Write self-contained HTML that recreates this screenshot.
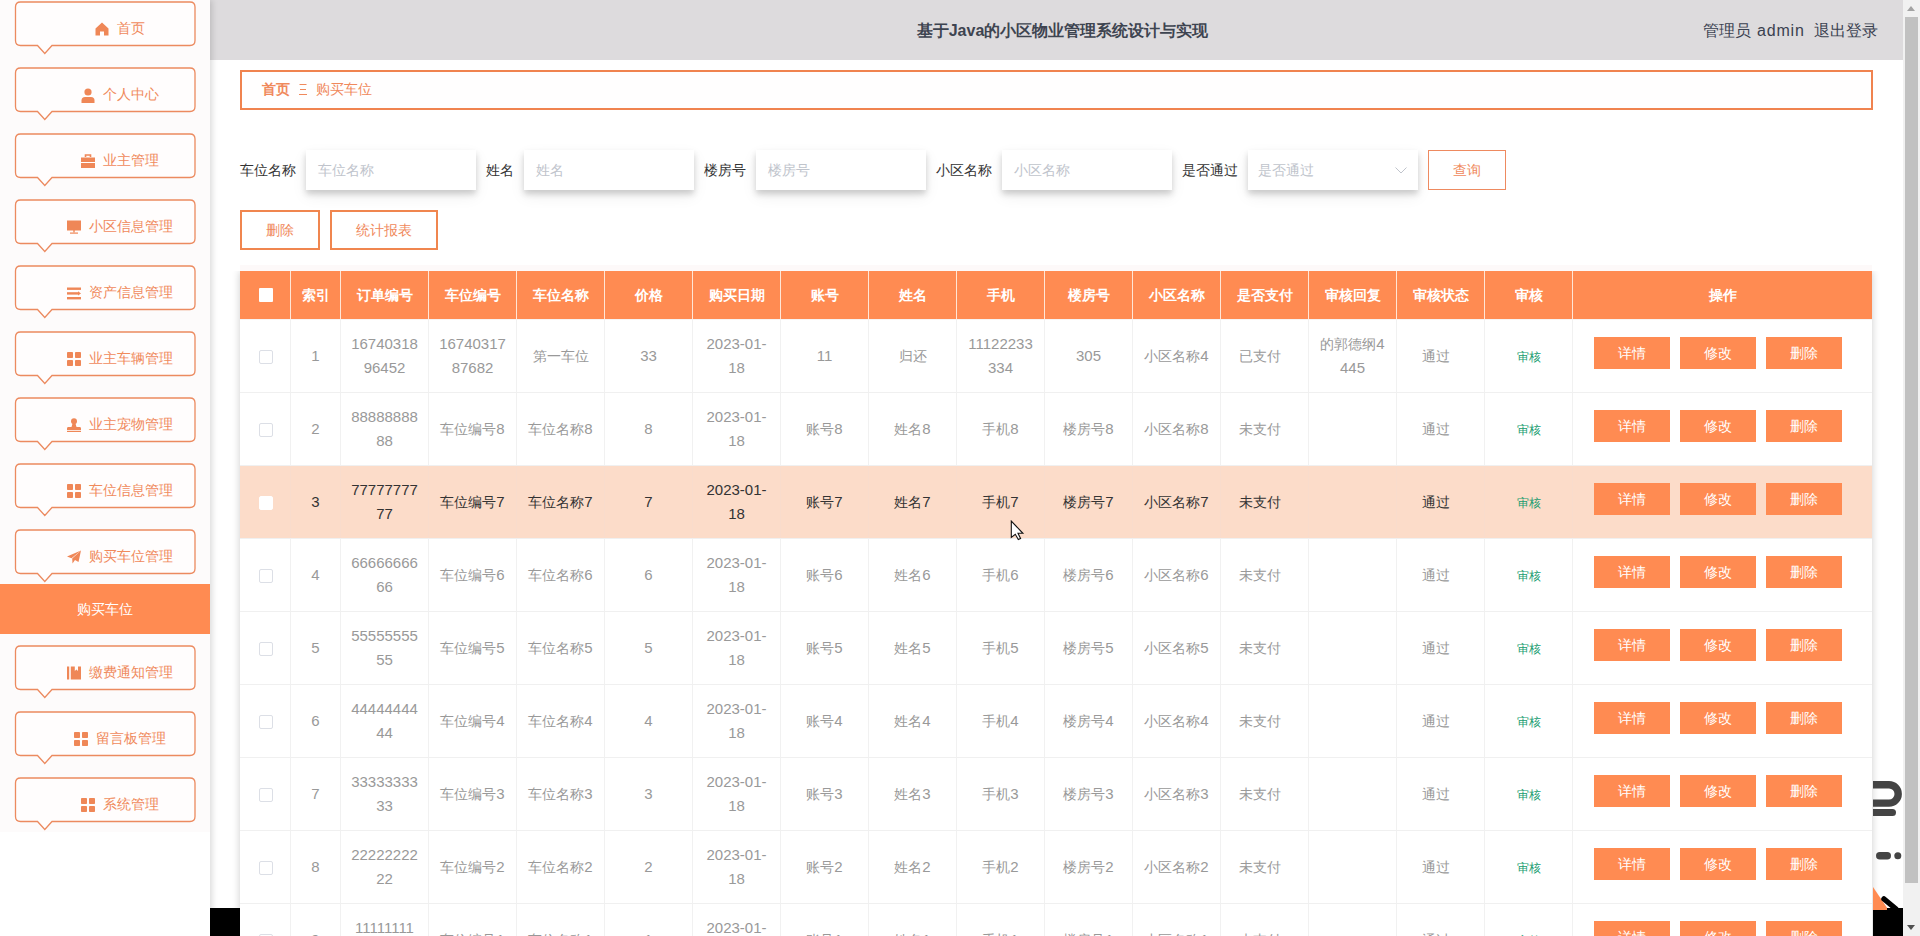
<!DOCTYPE html>
<html><head><meta charset="utf-8">
<style>
*{box-sizing:border-box;margin:0;padding:0}
html,body{width:1920px;height:936px;overflow:hidden;background:#fff;font-family:"Liberation Sans",sans-serif;}
#side{position:absolute;left:0;top:0;width:210px;height:936px;background:#fff;box-shadow:2px 0 6px rgba(0,0,0,0.15);z-index:3}
.mi{position:absolute;left:0;width:210px;height:66px}
.bb{position:absolute;left:13px;top:0}
.lab{position:absolute;left:44px;width:152px;top:20px;height:18px;display:flex;align-items:center;justify-content:center;color:#f08a5c;font-size:14px;white-space:nowrap}
.lab svg{margin-right:8px;flex:none}
#act{position:absolute;left:0;top:584px;width:210px;height:50px;background:#ff8b52;color:#fff;font-size:14px;line-height:50px;text-align:center}
#head{position:absolute;left:210px;top:0;width:1693px;height:60px;background:#dddbdd;z-index:2}
#title{position:absolute;left:0;width:1705px;top:20px;text-align:center;font-size:16px;font-weight:bold;color:#3d4450;line-height:22px}
.usr{position:absolute;top:20px;font-size:16px;color:#3a4150;line-height:22px;white-space:nowrap}
#sb{position:absolute;left:1903px;top:0;width:17px;height:936px;background:#f1f1f1;z-index:5}
#thumb{position:absolute;left:2px;top:17px;width:13px;height:866px;background:#c1c1c1}
.arr{position:absolute;left:4px;width:0;height:0;border-left:4.5px solid transparent;border-right:4.5px solid transparent}
#bc{position:absolute;left:240px;top:70px;width:1633px;height:40px;border:2px solid #f0834f;background:#fffefe;font-size:14px;color:#f0895c;line-height:36px}
#bc b{position:absolute;left:20px;top:-1px}
#bc .sep{position:absolute;left:57px;top:12px}
#bc span{position:absolute;left:74px;top:-1px}
.lbl{position:absolute;top:159px;font-size:14px;color:#333;line-height:22px;white-space:nowrap}
.inp{position:absolute;top:150px;width:170px;height:40px;background:#fff;box-shadow:0 4px 6px rgba(0,0,0,0.17),0 6px 16px rgba(0,0,0,0.07);font-size:14px;color:#c0c4cc;padding-left:12px;line-height:40px}
.obtn{position:absolute;top:210px;height:40px;border:2px solid #f0864f;color:#f0895c;font-size:14px;line-height:36px;text-align:center;background:#fff}
#q{position:absolute;left:1428px;top:150px;width:78px;height:40px;border:1px solid #ee8a60;color:#f0895c;font-size:14px;line-height:38px;text-align:center;background:#fff}
#tbl{position:absolute;left:240px;top:271px;width:1632px;height:720px;background:#fff;box-shadow:0 0 8px rgba(0,0,0,0.2)}
.th{position:absolute;top:0;height:49px;background:#ff8b52;color:#fff;font-weight:bold;font-size:14px;line-height:48px;text-align:center;border-bottom:1px solid #f7f3f1;background-clip:padding-box}
.cbh{display:inline-block;width:14px;height:14px;margin-left:1px;background:#fff;border-radius:1px;vertical-align:middle;margin-top:-3px}
.tr{position:absolute;left:0;width:1632px;height:73px;border-bottom:1px solid #f0f0f0;background:#fff;--bd:#f1f1f1}
.tr.hov{background:#fcdcc9}
.td{position:absolute;top:0;height:72px;display:flex;align-items:center;justify-content:center;text-align:center;color:#999;font-size:14px;line-height:24px}
.hov .td{color:#333}
.tr.hov{--bd:#f9dccc}
.cb{display:inline-block;width:14px;height:14px;margin-left:1px;border:1px solid #dcdfe6;border-radius:2px;background:#fff;vertical-align:middle}
.hov .cb{border-color:#fff}
.n{font-size:15px}
.sh{color:#209d70;font-size:12px}
.td.pr{padding-right:9px}
.td.ops{justify-content:flex-start;padding-left:21px}
.ops .ct{margin-top:-7px;display:flex}
.btn{display:inline-block;width:76px;height:32px;line-height:32px;background:#ff8b52;color:#fff;font-size:14px;margin-right:10px}
.btn:last-child{margin-right:0}
.blk{position:absolute;background:#000;z-index:6}
</style></head><body>
<div id="side">
<div style="position:absolute;left:0;top:0;width:210px;height:832px;background:#fdfbfb"></div>
<div class="mi" style="top:0px">
<svg class="bb" width="184" height="58" viewBox="0 0 184 58"><path d="M7.5 2 H177 Q182 2 182 7 V40.5 Q182 45.5 177 45.5 H39 L31.8 53.5 L24.5 45.5 H7.5 Q2.5 45.5 2.5 40.5 V7 Q2.5 2 7.5 2 Z" fill="#fffdfd" stroke="#ec8a5f" stroke-width="1.3"/></svg>
<div class="lab"><svg width="14" height="14" viewBox="0 0 14 14"><path d="M7 0.5 L13.5 6.5 V13.5 H9 V9.5 H5 V13.5 H0.5 V6.5 Z" fill="#ef8757"/></svg><span>首页</span></div></div>
<div class="mi" style="top:66px">
<svg class="bb" width="184" height="58" viewBox="0 0 184 58"><path d="M7.5 2 H177 Q182 2 182 7 V40.5 Q182 45.5 177 45.5 H39 L31.8 53.5 L24.5 45.5 H7.5 Q2.5 45.5 2.5 40.5 V7 Q2.5 2 7.5 2 Z" fill="#fffdfd" stroke="#ec8a5f" stroke-width="1.3"/></svg>
<div class="lab"><svg width="14" height="15" viewBox="0 0 14 15"><circle cx="7" cy="4" r="3.6" fill="#ef8757"/><path d="M0.5 15 V12.5 Q0.5 9 4 9 H10 Q13.5 9 13.5 12.5 V15 Z" fill="#ef8757"/></svg><span>个人中心</span></div></div>
<div class="mi" style="top:132px">
<svg class="bb" width="184" height="58" viewBox="0 0 184 58"><path d="M7.5 2 H177 Q182 2 182 7 V40.5 Q182 45.5 177 45.5 H39 L31.8 53.5 L24.5 45.5 H7.5 Q2.5 45.5 2.5 40.5 V7 Q2.5 2 7.5 2 Z" fill="#fffdfd" stroke="#ec8a5f" stroke-width="1.3"/></svg>
<div class="lab"><svg width="14" height="14" viewBox="0 0 14 14"><path d="M4.5 3 V1 H9.5 V3" stroke="#ef8757" stroke-width="1.6" fill="none"/><rect x="0" y="3.5" width="14" height="4.5" fill="#ef8757"/><rect x="0" y="9" width="14" height="5" fill="#ef8757"/></svg><span>业主管理</span></div></div>
<div class="mi" style="top:198px">
<svg class="bb" width="184" height="58" viewBox="0 0 184 58"><path d="M7.5 2 H177 Q182 2 182 7 V40.5 Q182 45.5 177 45.5 H39 L31.8 53.5 L24.5 45.5 H7.5 Q2.5 45.5 2.5 40.5 V7 Q2.5 2 7.5 2 Z" fill="#fffdfd" stroke="#ec8a5f" stroke-width="1.3"/></svg>
<div class="lab"><svg width="14" height="14" viewBox="0 0 14 14"><rect x="0" y="0.5" width="14" height="10" fill="#ef8757"/><rect x="6.3" y="10" width="1.4" height="2.5" fill="#ef8757"/><rect x="3" y="12.5" width="8" height="1.2" fill="#ef8757"/></svg><span>小区信息管理</span></div></div>
<div class="mi" style="top:264px">
<svg class="bb" width="184" height="58" viewBox="0 0 184 58"><path d="M7.5 2 H177 Q182 2 182 7 V40.5 Q182 45.5 177 45.5 H39 L31.8 53.5 L24.5 45.5 H7.5 Q2.5 45.5 2.5 40.5 V7 Q2.5 2 7.5 2 Z" fill="#fffdfd" stroke="#ec8a5f" stroke-width="1.3"/></svg>
<div class="lab"><svg width="14" height="13" viewBox="0 0 14 13"><rect x="0" y="0.5" width="14" height="2.4" fill="#ef8757"/><rect x="0" y="5.2" width="11" height="2.4" fill="#ef8757"/><path d="M11 4.2 L14 6.4 L11 8.6 Z" fill="#ef8757"/><rect x="0" y="10" width="14" height="2.4" fill="#ef8757"/></svg><span>资产信息管理</span></div></div>
<div class="mi" style="top:330px">
<svg class="bb" width="184" height="58" viewBox="0 0 184 58"><path d="M7.5 2 H177 Q182 2 182 7 V40.5 Q182 45.5 177 45.5 H39 L31.8 53.5 L24.5 45.5 H7.5 Q2.5 45.5 2.5 40.5 V7 Q2.5 2 7.5 2 Z" fill="#fffdfd" stroke="#ec8a5f" stroke-width="1.3"/></svg>
<div class="lab"><svg width="14" height="14" viewBox="0 0 14 14"><rect x="0" y="0" width="6" height="6" rx="0.8" fill="#ef8757"/><rect x="8" y="0" width="6" height="6" rx="0.8" fill="#ef8757"/><rect x="0" y="8" width="6" height="6" rx="0.8" fill="#ef8757"/><rect x="8" y="8" width="6" height="6" rx="0.8" fill="#ef8757"/></svg><span>业主车辆管理</span></div></div>
<div class="mi" style="top:396px">
<svg class="bb" width="184" height="58" viewBox="0 0 184 58"><path d="M7.5 2 H177 Q182 2 182 7 V40.5 Q182 45.5 177 45.5 H39 L31.8 53.5 L24.5 45.5 H7.5 Q2.5 45.5 2.5 40.5 V7 Q2.5 2 7.5 2 Z" fill="#fffdfd" stroke="#ec8a5f" stroke-width="1.3"/></svg>
<div class="lab"><svg width="14" height="14" viewBox="0 0 14 14"><circle cx="7" cy="3.2" r="3" fill="#ef8757"/><path d="M5.5 5.5 H8.5 L9.5 9 H13 Q14 9 14 10.5 V12 H0 V10.5 Q0 9 1 9 H4.5 Z" fill="#ef8757"/><rect x="0" y="12.8" width="14" height="1.2" fill="#ef8757"/></svg><span>业主宠物管理</span></div></div>
<div class="mi" style="top:462px">
<svg class="bb" width="184" height="58" viewBox="0 0 184 58"><path d="M7.5 2 H177 Q182 2 182 7 V40.5 Q182 45.5 177 45.5 H39 L31.8 53.5 L24.5 45.5 H7.5 Q2.5 45.5 2.5 40.5 V7 Q2.5 2 7.5 2 Z" fill="#fffdfd" stroke="#ec8a5f" stroke-width="1.3"/></svg>
<div class="lab"><svg width="14" height="14" viewBox="0 0 14 14"><rect x="0" y="0" width="6" height="6" rx="0.8" fill="#ef8757"/><rect x="8" y="0" width="6" height="6" rx="0.8" fill="#ef8757"/><rect x="0" y="8" width="6" height="6" rx="0.8" fill="#ef8757"/><rect x="8" y="8" width="6" height="6" rx="0.8" fill="#ef8757"/></svg><span>车位信息管理</span></div></div>
<div class="mi" style="top:528px">
<svg class="bb" width="184" height="58" viewBox="0 0 184 58"><path d="M7.5 2 H177 Q182 2 182 7 V40.5 Q182 45.5 177 45.5 H39 L31.8 53.5 L24.5 45.5 H7.5 Q2.5 45.5 2.5 40.5 V7 Q2.5 2 7.5 2 Z" fill="#fffdfd" stroke="#ec8a5f" stroke-width="1.3"/></svg>
<div class="lab"><svg width="14" height="14" viewBox="0 0 14 14"><path d="M14 0.5 L0 6.5 L4.5 8.3 Z" fill="#ef8757"/><path d="M14 0.5 L5.2 8.6 L5.5 13.5 L8 10 L11.5 12 Z" fill="#ef8757"/></svg><span>购买车位管理</span></div></div>
<div class="mi" style="top:644px">
<svg class="bb" width="184" height="58" viewBox="0 0 184 58"><path d="M7.5 2 H177 Q182 2 182 7 V40.5 Q182 45.5 177 45.5 H39 L31.8 53.5 L24.5 45.5 H7.5 Q2.5 45.5 2.5 40.5 V7 Q2.5 2 7.5 2 Z" fill="#fffdfd" stroke="#ec8a5f" stroke-width="1.3"/></svg>
<div class="lab"><svg width="14" height="14" viewBox="0 0 14 14"><rect x="0" y="0.5" width="2.2" height="13" fill="#ef8757"/><path d="M3.8 0.5 H7.8 V5 L9.4 3.6 L11 5 V0.5 H14 V13.5 H3.8 Z" fill="#ef8757"/></svg><span>缴费通知管理</span></div></div>
<div class="mi" style="top:710px">
<svg class="bb" width="184" height="58" viewBox="0 0 184 58"><path d="M7.5 2 H177 Q182 2 182 7 V40.5 Q182 45.5 177 45.5 H39 L31.8 53.5 L24.5 45.5 H7.5 Q2.5 45.5 2.5 40.5 V7 Q2.5 2 7.5 2 Z" fill="#fffdfd" stroke="#ec8a5f" stroke-width="1.3"/></svg>
<div class="lab"><svg width="14" height="14" viewBox="0 0 14 14"><rect x="0" y="0" width="6" height="6" rx="0.8" fill="#ef8757"/><rect x="8" y="0" width="6" height="6" rx="0.8" fill="#ef8757"/><rect x="0" y="8" width="6" height="6" rx="0.8" fill="#ef8757"/><rect x="8" y="8" width="6" height="6" rx="0.8" fill="#ef8757"/></svg><span>留言板管理</span></div></div>
<div class="mi" style="top:776px">
<svg class="bb" width="184" height="58" viewBox="0 0 184 58"><path d="M7.5 2 H177 Q182 2 182 7 V40.5 Q182 45.5 177 45.5 H39 L31.8 53.5 L24.5 45.5 H7.5 Q2.5 45.5 2.5 40.5 V7 Q2.5 2 7.5 2 Z" fill="#fffdfd" stroke="#ec8a5f" stroke-width="1.3"/></svg>
<div class="lab"><svg width="14" height="14" viewBox="0 0 14 14"><rect x="0" y="0" width="6" height="6" rx="0.8" fill="#ef8757"/><rect x="8" y="0" width="6" height="6" rx="0.8" fill="#ef8757"/><rect x="0" y="8" width="6" height="6" rx="0.8" fill="#ef8757"/><rect x="8" y="8" width="6" height="6" rx="0.8" fill="#ef8757"/></svg><span>系统管理</span></div></div>
<div id="act">购买车位</div>
</div>
<div id="head"><div id="title">基于Java的小区物业管理系统设计与实现</div><div class="usr" style="left:1493px">管理员</div><div class="usr" style="left:1547px;letter-spacing:0.8px">admin</div><div class="usr" style="left:1604px">退出登录</div></div>
<div id="bc"><b>首页</b><svg class="sep" width="8" height="11" viewBox="0 0 8 11"><rect x="0.5" y="0" width="7" height="1" fill="#f0895c"/><rect x="1" y="5" width="6" height="1" fill="#f0895c"/><rect x="0" y="10" width="8" height="1" fill="#f0895c"/></svg><span>购买车位</span></div>
<div class="lbl" style="left:240px">车位名称</div><div class="inp" style="left:306px">车位名称</div>
<div class="lbl" style="left:486px">姓名</div><div class="inp" style="left:524px">姓名</div>
<div class="lbl" style="left:704px">楼房号</div><div class="inp" style="left:756px">楼房号</div>
<div class="lbl" style="left:936px">小区名称</div><div class="inp" style="left:1002px">小区名称</div>
<div class="lbl" style="left:1182px">是否通过</div><div class="inp" style="left:1248px;padding-left:10px">是否通过<svg style="position:absolute;left:147px;top:17px" width="12" height="7" viewBox="0 0 12 7"><path d="M0.5 0.5 L6 6 L11.5 0.5" stroke="#c0c4cc" stroke-width="1" fill="none"/></svg></div>
<div id="q">查询</div>
<div class="obtn" style="left:240px;width:80px">删除</div>
<div class="obtn" style="left:330px;width:108px">统计报表</div>
<div id="tbl">
<div class="th" style="left:0px;width:50px;"><i class="cbh"></i></div>
<div class="th" style="left:50px;width:50px;border-left:1px solid #ffe6d6;">索引</div>
<div class="th" style="left:100px;width:88px;border-left:1px solid #ffe6d6;">订单编号</div>
<div class="th" style="left:188px;width:88px;border-left:1px solid #ffe6d6;">车位编号</div>
<div class="th" style="left:276px;width:88px;border-left:1px solid #ffe6d6;">车位名称</div>
<div class="th" style="left:364px;width:88px;border-left:1px solid #ffe6d6;">价格</div>
<div class="th" style="left:452px;width:88px;border-left:1px solid #ffe6d6;">购买日期</div>
<div class="th" style="left:540px;width:88px;border-left:1px solid #ffe6d6;">账号</div>
<div class="th" style="left:628px;width:88px;border-left:1px solid #ffe6d6;">姓名</div>
<div class="th" style="left:716px;width:88px;border-left:1px solid #ffe6d6;">手机</div>
<div class="th" style="left:804px;width:88px;border-left:1px solid #ffe6d6;">楼房号</div>
<div class="th" style="left:892px;width:88px;border-left:1px solid #ffe6d6;">小区名称</div>
<div class="th" style="left:980px;width:88px;border-left:1px solid #ffe6d6;">是否支付</div>
<div class="th" style="left:1068px;width:88px;border-left:1px solid #ffe6d6;">审核回复</div>
<div class="th" style="left:1156px;width:88px;border-left:1px solid #ffe6d6;">审核状态</div>
<div class="th" style="left:1244px;width:88px;border-left:1px solid #ffe6d6;">审核</div>
<div class="th" style="left:1332px;width:300px;border-left:1px solid #ffe6d6;">操作</div>
<div class="tr" style="top:49px"><div class="td" style="left:0px;width:50px;"><div class="ct"><i class="cb"></i></div></div><div class="td" style="left:50px;width:50px;border-left:1px solid var(--bd);"><div class="ct"><span class="n">1</span></div></div><div class="td" style="left:100px;width:88px;border-left:1px solid var(--bd);"><div class="ct"><span class="n">16740318</span><br><span class="n">96452</span></div></div><div class="td" style="left:188px;width:88px;border-left:1px solid var(--bd);"><div class="ct"><span class="n">16740317</span><br><span class="n">87682</span></div></div><div class="td" style="left:276px;width:88px;border-left:1px solid var(--bd);"><div class="ct">第一车位</div></div><div class="td" style="left:364px;width:88px;border-left:1px solid var(--bd);"><div class="ct"><span class="n">33</span></div></div><div class="td" style="left:452px;width:88px;border-left:1px solid var(--bd);"><div class="ct"><span class="n">2023-01-</span><br><span class="n">18</span></div></div><div class="td" style="left:540px;width:88px;border-left:1px solid var(--bd);"><div class="ct"><span class="n">11</span></div></div><div class="td" style="left:628px;width:88px;border-left:1px solid var(--bd);"><div class="ct">归还</div></div><div class="td" style="left:716px;width:88px;border-left:1px solid var(--bd);"><div class="ct"><span class="n">11122233</span><br><span class="n">334</span></div></div><div class="td" style="left:804px;width:88px;border-left:1px solid var(--bd);"><div class="ct"><span class="n">305</span></div></div><div class="td" style="left:892px;width:88px;border-left:1px solid var(--bd);"><div class="ct">小区名称<span class="n">4</span></div></div><div class="td pr" style="left:980px;width:88px;border-left:1px solid var(--bd);"><div class="ct">已支付</div></div><div class="td" style="left:1068px;width:88px;border-left:1px solid var(--bd);"><div class="ct">的郭德纲<span class="n">4</span><br><span class="n">445</span></div></div><div class="td pr" style="left:1156px;width:88px;border-left:1px solid var(--bd);"><div class="ct">通过</div></div><div class="td" style="left:1244px;width:88px;border-left:1px solid var(--bd);"><div class="ct"><span class="sh">审核</span></div></div><div class="td ops" style="left:1332px;width:300px;border-left:1px solid var(--bd);"><div class="ct"><span class="btn">详情</span><span class="btn">修改</span><span class="btn">删除</span></div></div></div>
<div class="tr" style="top:122px"><div class="td" style="left:0px;width:50px;"><div class="ct"><i class="cb"></i></div></div><div class="td" style="left:50px;width:50px;border-left:1px solid var(--bd);"><div class="ct"><span class="n">2</span></div></div><div class="td" style="left:100px;width:88px;border-left:1px solid var(--bd);"><div class="ct"><span class="n">88888888</span><br><span class="n">88</span></div></div><div class="td" style="left:188px;width:88px;border-left:1px solid var(--bd);"><div class="ct">车位编号<span class="n">8</span></div></div><div class="td" style="left:276px;width:88px;border-left:1px solid var(--bd);"><div class="ct">车位名称<span class="n">8</span></div></div><div class="td" style="left:364px;width:88px;border-left:1px solid var(--bd);"><div class="ct"><span class="n">8</span></div></div><div class="td" style="left:452px;width:88px;border-left:1px solid var(--bd);"><div class="ct"><span class="n">2023-01-</span><br><span class="n">18</span></div></div><div class="td" style="left:540px;width:88px;border-left:1px solid var(--bd);"><div class="ct">账号<span class="n">8</span></div></div><div class="td" style="left:628px;width:88px;border-left:1px solid var(--bd);"><div class="ct">姓名<span class="n">8</span></div></div><div class="td" style="left:716px;width:88px;border-left:1px solid var(--bd);"><div class="ct">手机<span class="n">8</span></div></div><div class="td" style="left:804px;width:88px;border-left:1px solid var(--bd);"><div class="ct">楼房号<span class="n">8</span></div></div><div class="td" style="left:892px;width:88px;border-left:1px solid var(--bd);"><div class="ct">小区名称<span class="n">8</span></div></div><div class="td pr" style="left:980px;width:88px;border-left:1px solid var(--bd);"><div class="ct">未支付</div></div><div class="td" style="left:1068px;width:88px;border-left:1px solid var(--bd);"><div class="ct"></div></div><div class="td pr" style="left:1156px;width:88px;border-left:1px solid var(--bd);"><div class="ct">通过</div></div><div class="td" style="left:1244px;width:88px;border-left:1px solid var(--bd);"><div class="ct"><span class="sh">审核</span></div></div><div class="td ops" style="left:1332px;width:300px;border-left:1px solid var(--bd);"><div class="ct"><span class="btn">详情</span><span class="btn">修改</span><span class="btn">删除</span></div></div></div>
<div class="tr hov" style="top:195px"><div class="td" style="left:0px;width:50px;"><div class="ct"><i class="cb"></i></div></div><div class="td" style="left:50px;width:50px;border-left:1px solid var(--bd);"><div class="ct"><span class="n">3</span></div></div><div class="td" style="left:100px;width:88px;border-left:1px solid var(--bd);"><div class="ct"><span class="n">77777777</span><br><span class="n">77</span></div></div><div class="td" style="left:188px;width:88px;border-left:1px solid var(--bd);"><div class="ct">车位编号<span class="n">7</span></div></div><div class="td" style="left:276px;width:88px;border-left:1px solid var(--bd);"><div class="ct">车位名称<span class="n">7</span></div></div><div class="td" style="left:364px;width:88px;border-left:1px solid var(--bd);"><div class="ct"><span class="n">7</span></div></div><div class="td" style="left:452px;width:88px;border-left:1px solid var(--bd);"><div class="ct"><span class="n">2023-01-</span><br><span class="n">18</span></div></div><div class="td" style="left:540px;width:88px;border-left:1px solid var(--bd);"><div class="ct">账号<span class="n">7</span></div></div><div class="td" style="left:628px;width:88px;border-left:1px solid var(--bd);"><div class="ct">姓名<span class="n">7</span></div></div><div class="td" style="left:716px;width:88px;border-left:1px solid var(--bd);"><div class="ct">手机<span class="n">7</span></div></div><div class="td" style="left:804px;width:88px;border-left:1px solid var(--bd);"><div class="ct">楼房号<span class="n">7</span></div></div><div class="td" style="left:892px;width:88px;border-left:1px solid var(--bd);"><div class="ct">小区名称<span class="n">7</span></div></div><div class="td pr" style="left:980px;width:88px;border-left:1px solid var(--bd);"><div class="ct">未支付</div></div><div class="td" style="left:1068px;width:88px;border-left:1px solid var(--bd);"><div class="ct"></div></div><div class="td pr" style="left:1156px;width:88px;border-left:1px solid var(--bd);"><div class="ct">通过</div></div><div class="td" style="left:1244px;width:88px;border-left:1px solid var(--bd);"><div class="ct"><span class="sh">审核</span></div></div><div class="td ops" style="left:1332px;width:300px;border-left:1px solid var(--bd);"><div class="ct"><span class="btn">详情</span><span class="btn">修改</span><span class="btn">删除</span></div></div></div>
<div class="tr" style="top:268px"><div class="td" style="left:0px;width:50px;"><div class="ct"><i class="cb"></i></div></div><div class="td" style="left:50px;width:50px;border-left:1px solid var(--bd);"><div class="ct"><span class="n">4</span></div></div><div class="td" style="left:100px;width:88px;border-left:1px solid var(--bd);"><div class="ct"><span class="n">66666666</span><br><span class="n">66</span></div></div><div class="td" style="left:188px;width:88px;border-left:1px solid var(--bd);"><div class="ct">车位编号<span class="n">6</span></div></div><div class="td" style="left:276px;width:88px;border-left:1px solid var(--bd);"><div class="ct">车位名称<span class="n">6</span></div></div><div class="td" style="left:364px;width:88px;border-left:1px solid var(--bd);"><div class="ct"><span class="n">6</span></div></div><div class="td" style="left:452px;width:88px;border-left:1px solid var(--bd);"><div class="ct"><span class="n">2023-01-</span><br><span class="n">18</span></div></div><div class="td" style="left:540px;width:88px;border-left:1px solid var(--bd);"><div class="ct">账号<span class="n">6</span></div></div><div class="td" style="left:628px;width:88px;border-left:1px solid var(--bd);"><div class="ct">姓名<span class="n">6</span></div></div><div class="td" style="left:716px;width:88px;border-left:1px solid var(--bd);"><div class="ct">手机<span class="n">6</span></div></div><div class="td" style="left:804px;width:88px;border-left:1px solid var(--bd);"><div class="ct">楼房号<span class="n">6</span></div></div><div class="td" style="left:892px;width:88px;border-left:1px solid var(--bd);"><div class="ct">小区名称<span class="n">6</span></div></div><div class="td pr" style="left:980px;width:88px;border-left:1px solid var(--bd);"><div class="ct">未支付</div></div><div class="td" style="left:1068px;width:88px;border-left:1px solid var(--bd);"><div class="ct"></div></div><div class="td pr" style="left:1156px;width:88px;border-left:1px solid var(--bd);"><div class="ct">通过</div></div><div class="td" style="left:1244px;width:88px;border-left:1px solid var(--bd);"><div class="ct"><span class="sh">审核</span></div></div><div class="td ops" style="left:1332px;width:300px;border-left:1px solid var(--bd);"><div class="ct"><span class="btn">详情</span><span class="btn">修改</span><span class="btn">删除</span></div></div></div>
<div class="tr" style="top:341px"><div class="td" style="left:0px;width:50px;"><div class="ct"><i class="cb"></i></div></div><div class="td" style="left:50px;width:50px;border-left:1px solid var(--bd);"><div class="ct"><span class="n">5</span></div></div><div class="td" style="left:100px;width:88px;border-left:1px solid var(--bd);"><div class="ct"><span class="n">55555555</span><br><span class="n">55</span></div></div><div class="td" style="left:188px;width:88px;border-left:1px solid var(--bd);"><div class="ct">车位编号<span class="n">5</span></div></div><div class="td" style="left:276px;width:88px;border-left:1px solid var(--bd);"><div class="ct">车位名称<span class="n">5</span></div></div><div class="td" style="left:364px;width:88px;border-left:1px solid var(--bd);"><div class="ct"><span class="n">5</span></div></div><div class="td" style="left:452px;width:88px;border-left:1px solid var(--bd);"><div class="ct"><span class="n">2023-01-</span><br><span class="n">18</span></div></div><div class="td" style="left:540px;width:88px;border-left:1px solid var(--bd);"><div class="ct">账号<span class="n">5</span></div></div><div class="td" style="left:628px;width:88px;border-left:1px solid var(--bd);"><div class="ct">姓名<span class="n">5</span></div></div><div class="td" style="left:716px;width:88px;border-left:1px solid var(--bd);"><div class="ct">手机<span class="n">5</span></div></div><div class="td" style="left:804px;width:88px;border-left:1px solid var(--bd);"><div class="ct">楼房号<span class="n">5</span></div></div><div class="td" style="left:892px;width:88px;border-left:1px solid var(--bd);"><div class="ct">小区名称<span class="n">5</span></div></div><div class="td pr" style="left:980px;width:88px;border-left:1px solid var(--bd);"><div class="ct">未支付</div></div><div class="td" style="left:1068px;width:88px;border-left:1px solid var(--bd);"><div class="ct"></div></div><div class="td pr" style="left:1156px;width:88px;border-left:1px solid var(--bd);"><div class="ct">通过</div></div><div class="td" style="left:1244px;width:88px;border-left:1px solid var(--bd);"><div class="ct"><span class="sh">审核</span></div></div><div class="td ops" style="left:1332px;width:300px;border-left:1px solid var(--bd);"><div class="ct"><span class="btn">详情</span><span class="btn">修改</span><span class="btn">删除</span></div></div></div>
<div class="tr" style="top:414px"><div class="td" style="left:0px;width:50px;"><div class="ct"><i class="cb"></i></div></div><div class="td" style="left:50px;width:50px;border-left:1px solid var(--bd);"><div class="ct"><span class="n">6</span></div></div><div class="td" style="left:100px;width:88px;border-left:1px solid var(--bd);"><div class="ct"><span class="n">44444444</span><br><span class="n">44</span></div></div><div class="td" style="left:188px;width:88px;border-left:1px solid var(--bd);"><div class="ct">车位编号<span class="n">4</span></div></div><div class="td" style="left:276px;width:88px;border-left:1px solid var(--bd);"><div class="ct">车位名称<span class="n">4</span></div></div><div class="td" style="left:364px;width:88px;border-left:1px solid var(--bd);"><div class="ct"><span class="n">4</span></div></div><div class="td" style="left:452px;width:88px;border-left:1px solid var(--bd);"><div class="ct"><span class="n">2023-01-</span><br><span class="n">18</span></div></div><div class="td" style="left:540px;width:88px;border-left:1px solid var(--bd);"><div class="ct">账号<span class="n">4</span></div></div><div class="td" style="left:628px;width:88px;border-left:1px solid var(--bd);"><div class="ct">姓名<span class="n">4</span></div></div><div class="td" style="left:716px;width:88px;border-left:1px solid var(--bd);"><div class="ct">手机<span class="n">4</span></div></div><div class="td" style="left:804px;width:88px;border-left:1px solid var(--bd);"><div class="ct">楼房号<span class="n">4</span></div></div><div class="td" style="left:892px;width:88px;border-left:1px solid var(--bd);"><div class="ct">小区名称<span class="n">4</span></div></div><div class="td pr" style="left:980px;width:88px;border-left:1px solid var(--bd);"><div class="ct">未支付</div></div><div class="td" style="left:1068px;width:88px;border-left:1px solid var(--bd);"><div class="ct"></div></div><div class="td pr" style="left:1156px;width:88px;border-left:1px solid var(--bd);"><div class="ct">通过</div></div><div class="td" style="left:1244px;width:88px;border-left:1px solid var(--bd);"><div class="ct"><span class="sh">审核</span></div></div><div class="td ops" style="left:1332px;width:300px;border-left:1px solid var(--bd);"><div class="ct"><span class="btn">详情</span><span class="btn">修改</span><span class="btn">删除</span></div></div></div>
<div class="tr" style="top:487px"><div class="td" style="left:0px;width:50px;"><div class="ct"><i class="cb"></i></div></div><div class="td" style="left:50px;width:50px;border-left:1px solid var(--bd);"><div class="ct"><span class="n">7</span></div></div><div class="td" style="left:100px;width:88px;border-left:1px solid var(--bd);"><div class="ct"><span class="n">33333333</span><br><span class="n">33</span></div></div><div class="td" style="left:188px;width:88px;border-left:1px solid var(--bd);"><div class="ct">车位编号<span class="n">3</span></div></div><div class="td" style="left:276px;width:88px;border-left:1px solid var(--bd);"><div class="ct">车位名称<span class="n">3</span></div></div><div class="td" style="left:364px;width:88px;border-left:1px solid var(--bd);"><div class="ct"><span class="n">3</span></div></div><div class="td" style="left:452px;width:88px;border-left:1px solid var(--bd);"><div class="ct"><span class="n">2023-01-</span><br><span class="n">18</span></div></div><div class="td" style="left:540px;width:88px;border-left:1px solid var(--bd);"><div class="ct">账号<span class="n">3</span></div></div><div class="td" style="left:628px;width:88px;border-left:1px solid var(--bd);"><div class="ct">姓名<span class="n">3</span></div></div><div class="td" style="left:716px;width:88px;border-left:1px solid var(--bd);"><div class="ct">手机<span class="n">3</span></div></div><div class="td" style="left:804px;width:88px;border-left:1px solid var(--bd);"><div class="ct">楼房号<span class="n">3</span></div></div><div class="td" style="left:892px;width:88px;border-left:1px solid var(--bd);"><div class="ct">小区名称<span class="n">3</span></div></div><div class="td pr" style="left:980px;width:88px;border-left:1px solid var(--bd);"><div class="ct">未支付</div></div><div class="td" style="left:1068px;width:88px;border-left:1px solid var(--bd);"><div class="ct"></div></div><div class="td pr" style="left:1156px;width:88px;border-left:1px solid var(--bd);"><div class="ct">通过</div></div><div class="td" style="left:1244px;width:88px;border-left:1px solid var(--bd);"><div class="ct"><span class="sh">审核</span></div></div><div class="td ops" style="left:1332px;width:300px;border-left:1px solid var(--bd);"><div class="ct"><span class="btn">详情</span><span class="btn">修改</span><span class="btn">删除</span></div></div></div>
<div class="tr" style="top:560px"><div class="td" style="left:0px;width:50px;"><div class="ct"><i class="cb"></i></div></div><div class="td" style="left:50px;width:50px;border-left:1px solid var(--bd);"><div class="ct"><span class="n">8</span></div></div><div class="td" style="left:100px;width:88px;border-left:1px solid var(--bd);"><div class="ct"><span class="n">22222222</span><br><span class="n">22</span></div></div><div class="td" style="left:188px;width:88px;border-left:1px solid var(--bd);"><div class="ct">车位编号<span class="n">2</span></div></div><div class="td" style="left:276px;width:88px;border-left:1px solid var(--bd);"><div class="ct">车位名称<span class="n">2</span></div></div><div class="td" style="left:364px;width:88px;border-left:1px solid var(--bd);"><div class="ct"><span class="n">2</span></div></div><div class="td" style="left:452px;width:88px;border-left:1px solid var(--bd);"><div class="ct"><span class="n">2023-01-</span><br><span class="n">18</span></div></div><div class="td" style="left:540px;width:88px;border-left:1px solid var(--bd);"><div class="ct">账号<span class="n">2</span></div></div><div class="td" style="left:628px;width:88px;border-left:1px solid var(--bd);"><div class="ct">姓名<span class="n">2</span></div></div><div class="td" style="left:716px;width:88px;border-left:1px solid var(--bd);"><div class="ct">手机<span class="n">2</span></div></div><div class="td" style="left:804px;width:88px;border-left:1px solid var(--bd);"><div class="ct">楼房号<span class="n">2</span></div></div><div class="td" style="left:892px;width:88px;border-left:1px solid var(--bd);"><div class="ct">小区名称<span class="n">2</span></div></div><div class="td pr" style="left:980px;width:88px;border-left:1px solid var(--bd);"><div class="ct">未支付</div></div><div class="td" style="left:1068px;width:88px;border-left:1px solid var(--bd);"><div class="ct"></div></div><div class="td pr" style="left:1156px;width:88px;border-left:1px solid var(--bd);"><div class="ct">通过</div></div><div class="td" style="left:1244px;width:88px;border-left:1px solid var(--bd);"><div class="ct"><span class="sh">审核</span></div></div><div class="td ops" style="left:1332px;width:300px;border-left:1px solid var(--bd);"><div class="ct"><span class="btn">详情</span><span class="btn">修改</span><span class="btn">删除</span></div></div></div>
<div class="tr" style="top:633px"><div class="td" style="left:0px;width:50px;"><div class="ct"><i class="cb"></i></div></div><div class="td" style="left:50px;width:50px;border-left:1px solid var(--bd);"><div class="ct"><span class="n">9</span></div></div><div class="td" style="left:100px;width:88px;border-left:1px solid var(--bd);"><div class="ct"><span class="n">11111111</span><br><span class="n">11</span></div></div><div class="td" style="left:188px;width:88px;border-left:1px solid var(--bd);"><div class="ct">车位编号<span class="n">1</span></div></div><div class="td" style="left:276px;width:88px;border-left:1px solid var(--bd);"><div class="ct">车位名称<span class="n">1</span></div></div><div class="td" style="left:364px;width:88px;border-left:1px solid var(--bd);"><div class="ct"><span class="n">1</span></div></div><div class="td" style="left:452px;width:88px;border-left:1px solid var(--bd);"><div class="ct"><span class="n">2023-01-</span><br><span class="n">18</span></div></div><div class="td" style="left:540px;width:88px;border-left:1px solid var(--bd);"><div class="ct">账号<span class="n">1</span></div></div><div class="td" style="left:628px;width:88px;border-left:1px solid var(--bd);"><div class="ct">姓名<span class="n">1</span></div></div><div class="td" style="left:716px;width:88px;border-left:1px solid var(--bd);"><div class="ct">手机<span class="n">1</span></div></div><div class="td" style="left:804px;width:88px;border-left:1px solid var(--bd);"><div class="ct">楼房号<span class="n">1</span></div></div><div class="td" style="left:892px;width:88px;border-left:1px solid var(--bd);"><div class="ct">小区名称<span class="n">1</span></div></div><div class="td pr" style="left:980px;width:88px;border-left:1px solid var(--bd);"><div class="ct">未支付</div></div><div class="td" style="left:1068px;width:88px;border-left:1px solid var(--bd);"><div class="ct"></div></div><div class="td pr" style="left:1156px;width:88px;border-left:1px solid var(--bd);"><div class="ct">通过</div></div><div class="td" style="left:1244px;width:88px;border-left:1px solid var(--bd);"><div class="ct"><span class="sh">审核</span></div></div><div class="td ops" style="left:1332px;width:300px;border-left:1px solid var(--bd);"><div class="ct"><span class="btn">详情</span><span class="btn">修改</span><span class="btn">删除</span></div></div></div>
</div>
<svg style="position:absolute;left:1010px;top:520px;z-index:9" width="16" height="22" viewBox="0 0 16 22"><path d="M1.3 1.1 V17.4 L5.3 14.3 L8.3 19.5 L10.6 18.4 L8 13.3 H12.9 Z" fill="#fff" stroke="#111" stroke-width="1.1" stroke-linejoin="miter"/></svg>
<div style="position:absolute;left:225px;top:252px;width:1665px;height:19px;background:#fff"></div>
<div style="position:absolute;left:240px;top:265px;width:1632px;height:6px;background:#fdf9f9"></div>
<div id="sb"><div class="arr" style="top:6px;border-bottom:5px solid #a3a3a3"></div><div id="thumb"></div><div class="arr" style="top:925px;border-top:5px solid #505050"></div></div>
<div class="blk" style="left:210px;top:908px;width:30px;height:28px"></div>
<svg style="position:absolute;left:1873px;top:776px;z-index:4" width="30" height="160" viewBox="0 0 30 160">
<path d="M0 5 H16 A12.8 12.8 0 0 1 16 30.8 H0 V23.5 H16 A5.5 5.5 0 0 0 16 12.5 H0 Z" fill="#444"/>
<path d="M0 33 H19.5 A3.5 3.5 0 0 1 19.5 40 H0 Z" fill="#444"/>
<rect x="3" y="76" width="15" height="7.5" rx="3.75" fill="#444"/>
<circle cx="24.8" cy="79.7" r="3.5" fill="#444"/>
<path d="M0 111 L15.5 134 H0 Z" fill="#ff8b52"/>
<path d="M11 123 L23 133" stroke="#000" stroke-width="5.5" stroke-linecap="round"/>
<rect x="0" y="134" width="30" height="26" fill="#000"/>
<rect x="14" y="132" width="16" height="4" fill="#000" />
</svg>
</body></html>
